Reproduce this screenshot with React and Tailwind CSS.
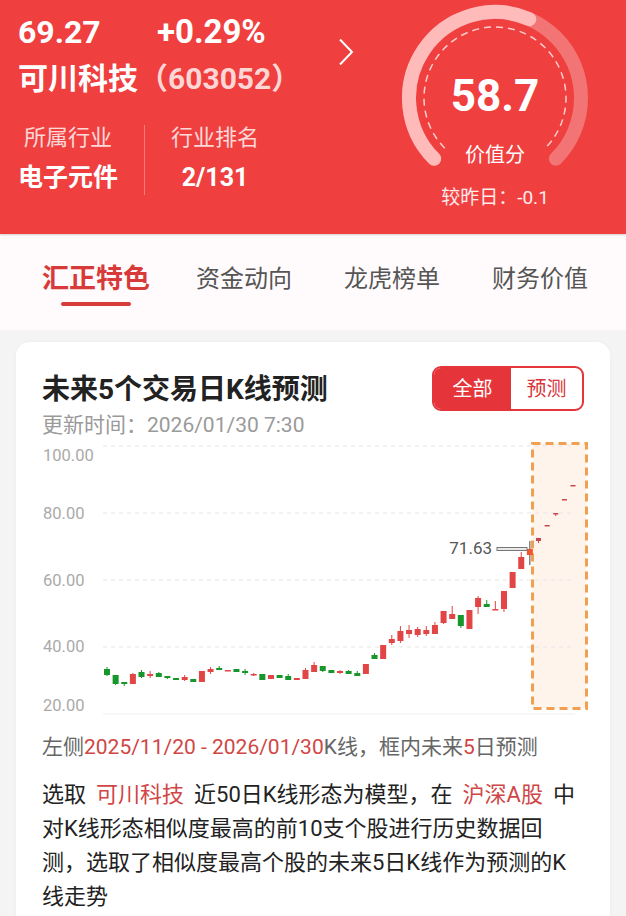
import React from 'react';

// K线数据 [open, close, high, low]
const candles = [
  [33.43, 31.64, 34.03, 31.34],
  [31.64, 28.96, 31.64, 28.66],
  [29.55, 28.96, 29.55, 28.36],
  [28.96, 31.94, 32.24, 28.96],
  [32.54, 31.04, 33.13, 30.75],
  [31.34, 31.94, 32.84, 30.75],
  [32.24, 31.04, 32.54, 31.04],
  [31.34, 30.75, 31.34, 30.45],
  [30.75, 30.15, 30.75, 30.15],
  [30.15, 31.04, 31.64, 29.85],
  [30.45, 29.55, 30.45, 29.55],
  [29.55, 32.84, 32.84, 29.55],
  [32.54, 33.43, 34.03, 31.94],
  [33.73, 33.13, 34.33, 33.13],
  [32.84, 33.13, 33.13, 32.84],
  [33.43, 32.54, 33.43, 32.54],
  [32.84, 32.24, 33.43, 31.64],
  [31.64, 31.94, 32.24, 31.34],
  [31.94, 30.15, 31.94, 30.15],
  [30.45, 31.64, 31.64, 30.45],
  [31.64, 30.75, 31.64, 30.75],
  [31.34, 30.15, 31.94, 30.15],
  [30.15, 30.75, 30.75, 30.15],
  [30.45, 33.13, 33.73, 30.45],
  [32.54, 34.63, 35.52, 32.54],
  [34.33, 32.84, 34.33, 32.54],
  [33.13, 32.24, 33.13, 32.24],
  [32.24, 32.84, 33.13, 31.94],
  [32.84, 31.94, 33.13, 31.94],
  [32.24, 31.34, 32.84, 31.34],
  [31.94, 34.93, 34.93, 31.94],
  [37.61, 36.42, 38.21, 36.42],
  [36.42, 40.6, 40.6, 36.42],
  [41.19, 42.39, 43.58, 40.6],
  [41.79, 44.78, 46.27, 41.19],
  [43.88, 45.07, 46.57, 42.69],
  [43.58, 45.37, 45.97, 42.99],
  [43.88, 45.07, 46.27, 43.28],
  [43.88, 46.57, 47.46, 43.88],
  [47.16, 50.75, 50.75, 46.87],
  [48.36, 49.85, 52.24, 48.36],
  [49.55, 46.27, 49.55, 45.67],
  [45.37, 51.04, 51.04, 45.37],
  [51.94, 54.63, 55.22, 49.85],
  [52.84, 51.94, 54.03, 51.94],
  [51.04, 51.34, 53.73, 51.04],
  [51.34, 56.72, 56.72, 50.45],
  [57.61, 62.39, 62.39, 57.61],
  [63.28, 66.87, 68.36, 63.28],
  [67.46, 69.27, 71.63, 64.48],
];

const forecast = [
  [71.64, 72.54, 72.54, 71.04],
  [76.12, 76.42, 76.42, 76.12],
  [79.7, 80.0, 80.0, 79.1],
  [83.88, 84.18, 84.18, 83.88],
  [88.06, 88.36, 88.36, 88.06],
];

const yOf = (v) => 276 - (v - 20) * 3.35;
const xOf = (i) => 65 + i * 8.63;

const axis = [
  { v: 100, label: '100.00', ty: 23 },
  { v: 80, label: '80.00', ty: 81 },
  { v: 60, label: '60.00', ty: 148 },
  { v: 40, label: '40.00', ty: 214 },
  { v: 20, label: '20.00', ty: 273 },
];

const tabs = ['汇正特色', '资金动向', '龙虎榜单', '财务价值'];

function polar(cx, cy, r, deg) {
  const a = (deg * Math.PI) / 180;
  return [cx + r * Math.cos(a), cy + r * Math.sin(a)];
}

function arc(cx, cy, r, a0, a1) {
  const [x0, y0] = polar(cx, cy, r, a0);
  const [x1, y1] = polar(cx, cy, r, a1);
  const large = a1 - a0 > 180 ? 1 : 0;
  return `M ${x0} ${y0} A ${r} ${r} 0 ${large} 1 ${x1} ${y1}`;
}

function Gauge({ score }) {
  return (
    <div className="relative mr-[26px] w-[210px] shrink-0">
      <svg className="absolute left-0 top-0" width="210" height="172" viewBox="0 0 210 172">
        <path d={arc(105, 98, 86, 135, 405)} fill="none" stroke="rgba(255,255,255,0.28)" strokeWidth="14" strokeLinecap="round" />
        <path d={arc(105, 98, 86, 135, 135 + 270 * (score / 100))} fill="none" stroke="#ffbaba" strokeWidth="14" strokeLinecap="round" />
        <path d={arc(105, 98, 71, 135, 405)} fill="none" stroke="rgba(255,255,255,0.75)" strokeWidth="1.5" strokeDasharray="7 5" />
      </svg>
      <div className="relative flex flex-col items-center pt-[70px]">
        <span className="text-[44px] font-bold leading-[52px]">{score}</span>
        <span className="mt-[19px] text-[20px] leading-[28px]">价值分</span>
        <span className="mt-[16px] text-[19px] leading-[26px] text-white/90">较昨日：-0.1</span>
      </div>
    </div>
  );
}

function Header() {
  return (
    <div className="relative z-10 flex h-[234px] bg-[#ef3f3f] text-white shadow-[0_1px_2px_rgba(0,0,0,0.18)]">
      <div className="flex-1 pl-[18px] pt-[14px]">
        <div className="flex">
          <div className="w-[320px]">
            <div className="flex text-[32px] font-bold leading-[36px]">
              <span className="w-[139px]">69.27</span>
              <span className="text-[33px]">+0.29%</span>
            </div>
            <div className="mt-[9px] whitespace-nowrap text-[30px] font-bold leading-[40px]">
              可川科技<span className="text-[#ffd6d6]">（603052）</span>
            </div>
          </div>
          <svg className="mt-[24px]" width="16" height="28" viewBox="0 0 16 28">
            <path d="M2 1.5 L14 14 L2 26.5" fill="none" stroke="white" strokeWidth="2" />
          </svg>
        </div>
        <div className="mt-[24px] flex">
          <div className="flex flex-col items-center">
            <span className="text-[22px] leading-[30px] text-white/80">所属行业</span>
            <span className="mt-[8px] text-[25px] font-bold leading-[34px]">电子元件</span>
          </div>
          <div className="mx-[26px] mt-[2px] h-[70px] w-px bg-white/30" />
          <div className="flex flex-col items-center">
            <span className="text-[22px] leading-[30px] text-white/80">行业排名</span>
            <span className="mt-[8px] text-[25px] font-bold leading-[34px]">2/131</span>
          </div>
        </div>
      </div>
      <Gauge score={58.7} />
    </div>
  );
}

function Tabs() {
  return (
    <div className="grid h-[96px] grid-cols-4 bg-[#fffbfc] pl-[22px] pr-[12px] pt-[29px]">
      {tabs.map((t, i) => (
        <div key={t} className="flex flex-col items-center">
          {i === 0 ? (
            <>
              <span className="h-[32px] text-[27px] font-bold leading-[32px] text-[#d83a3a]">{t}</span>
              <span className="mt-[7px] h-[4px] w-[70px] rounded-full bg-[#d83a3a]" />
            </>
          ) : (
            <span className="h-[32px] text-[24px] leading-[32px] text-[#555]">{t}</span>
          )}
        </div>
      ))}
    </div>
  );
}

function Candle({ d, x, up, down, w = 6, wick }) {
  const [o, c, h, l] = d;
  const color = c >= o ? up : down;
  const top = yOf(Math.max(o, c));
  const bot = yOf(Math.min(o, c));
  return (
    <g>
      <line x1={x} x2={x} y1={yOf(h)} y2={yOf(l)} stroke={wick || color} strokeWidth="1" />
      <rect x={x - w / 2} y={top} width={w} height={Math.max(bot - top, 1.5)} fill={color} />
    </g>
  );
}

function KChart() {
  const last = candles.length - 1;
  return (
    <svg className="block" width="546" height="284" viewBox="0 0 546 284">
      <rect x="490.5" y="5.5" width="54" height="265" fill="#fff4ec" />
      {axis.map((a) => (
        <g key={a.v}>
          <line
            x1="61"
            x2="533"
            y1={yOf(a.v)}
            y2={yOf(a.v)}
            stroke={a.v === 20 ? '#efefef' : '#e6e6e6'}
            strokeWidth="1"
            strokeDasharray={a.v === 20 ? undefined : '4 4'}
          />
          <text x="1" y={a.ty} fontSize="16.5" fill="#aaaaaa">
            {a.label}
          </text>
        </g>
      ))}
      <rect x="490.5" y="5.5" width="54" height="265" fill="none" stroke="#f0a050" strokeWidth="3" strokeDasharray="8 5" />
      {candles.map((d, i) =>
        i === last ? (
          <Candle key={i} d={d} x={xOf(i)} up="#f0572f" down="#f0572f" wick="#444" />
        ) : (
          <Candle key={i} d={d} x={xOf(i)} up="#e24545" down="#17962b" />
        )
      )}
      {forecast.map((d, i) => (
        <Candle key={'f' + i} d={d} x={xOf(candles.length + i)} up="#c9464e" down="#c9464e" w={5} />
      ))}
      <rect x="455" y="109.5" width="30" height="3" fill="#e8e8e8" stroke="#777" strokeWidth="1" />
      <text x="450" y="116" fontSize="17" fill="#555" textAnchor="end">
        71.63
      </text>
    </svg>
  );
}

function PredictCard() {
  return (
    <div className="mx-[16px] rounded-[14px] bg-white px-[26px] pb-[24px] pt-[24px] shadow-[0_0_4px_rgba(0,0,0,0.04)]">
      <div className="flex items-start justify-between">
        <div>
          <div className="mt-[6px] text-[28px] font-bold leading-[35px] text-[#222]">未来5个交易日K线预测</div>
          <div className="mt-[5px] text-[21px] leading-[26px] text-[#9a9a9a]">更新时间：2026/01/30 7:30</div>
        </div>
        <div className="flex h-[45px] w-[152px] overflow-hidden rounded-[9px] border-2 border-[#e5343a]">
          <div className="flex w-[77px] items-center justify-center bg-[#e5343a] text-[20px] text-white">全部</div>
          <div className="flex flex-1 items-center justify-center text-[20px] text-[#d8353a]">预测</div>
        </div>
      </div>
      <KChart />
      <div className="mt-[12px] text-[21px] leading-[26px] text-[#666]">
        <span>左侧</span>
        <span className="text-[#d04646]">2025/11/20 - 2026/01/30</span>
        <span>K线，框内未来</span>
        <span className="text-[#d04646]">5</span>
        <span>日预测</span>
      </div>
      <div className="mt-[18px] text-[22px] leading-[34px] text-[#222]">
        <div className="flex whitespace-nowrap">
          <span>选取</span>
          <span className="ml-[10px] text-[#d04646]">可川科技</span>
          <span className="ml-[10px]">近50日K线形态为模型，在</span>
          <span className="ml-[10px] text-[#d04646]">沪深A股</span>
          <span className="ml-[10px]">中</span>
        </div>
        <div className="whitespace-nowrap">对K线形态相似度最高的前10支个股进行历史数据回</div>
        <div className="whitespace-nowrap">测，选取了相似度最高个股的未来5日K线作为预测的K</div>
        <div className="whitespace-nowrap">线走势</div>
      </div>
    </div>
  );
}

export default function App() {
  return (
    <div className="min-h-[916px] w-[626px] bg-[#f4f4f4] font-[Roboto,'Noto_Sans_CJK_SC',sans-serif]">
      <Header />
      <Tabs />
      <div className="pt-[12px]">
        <PredictCard />
      </div>
    </div>
  );
}
